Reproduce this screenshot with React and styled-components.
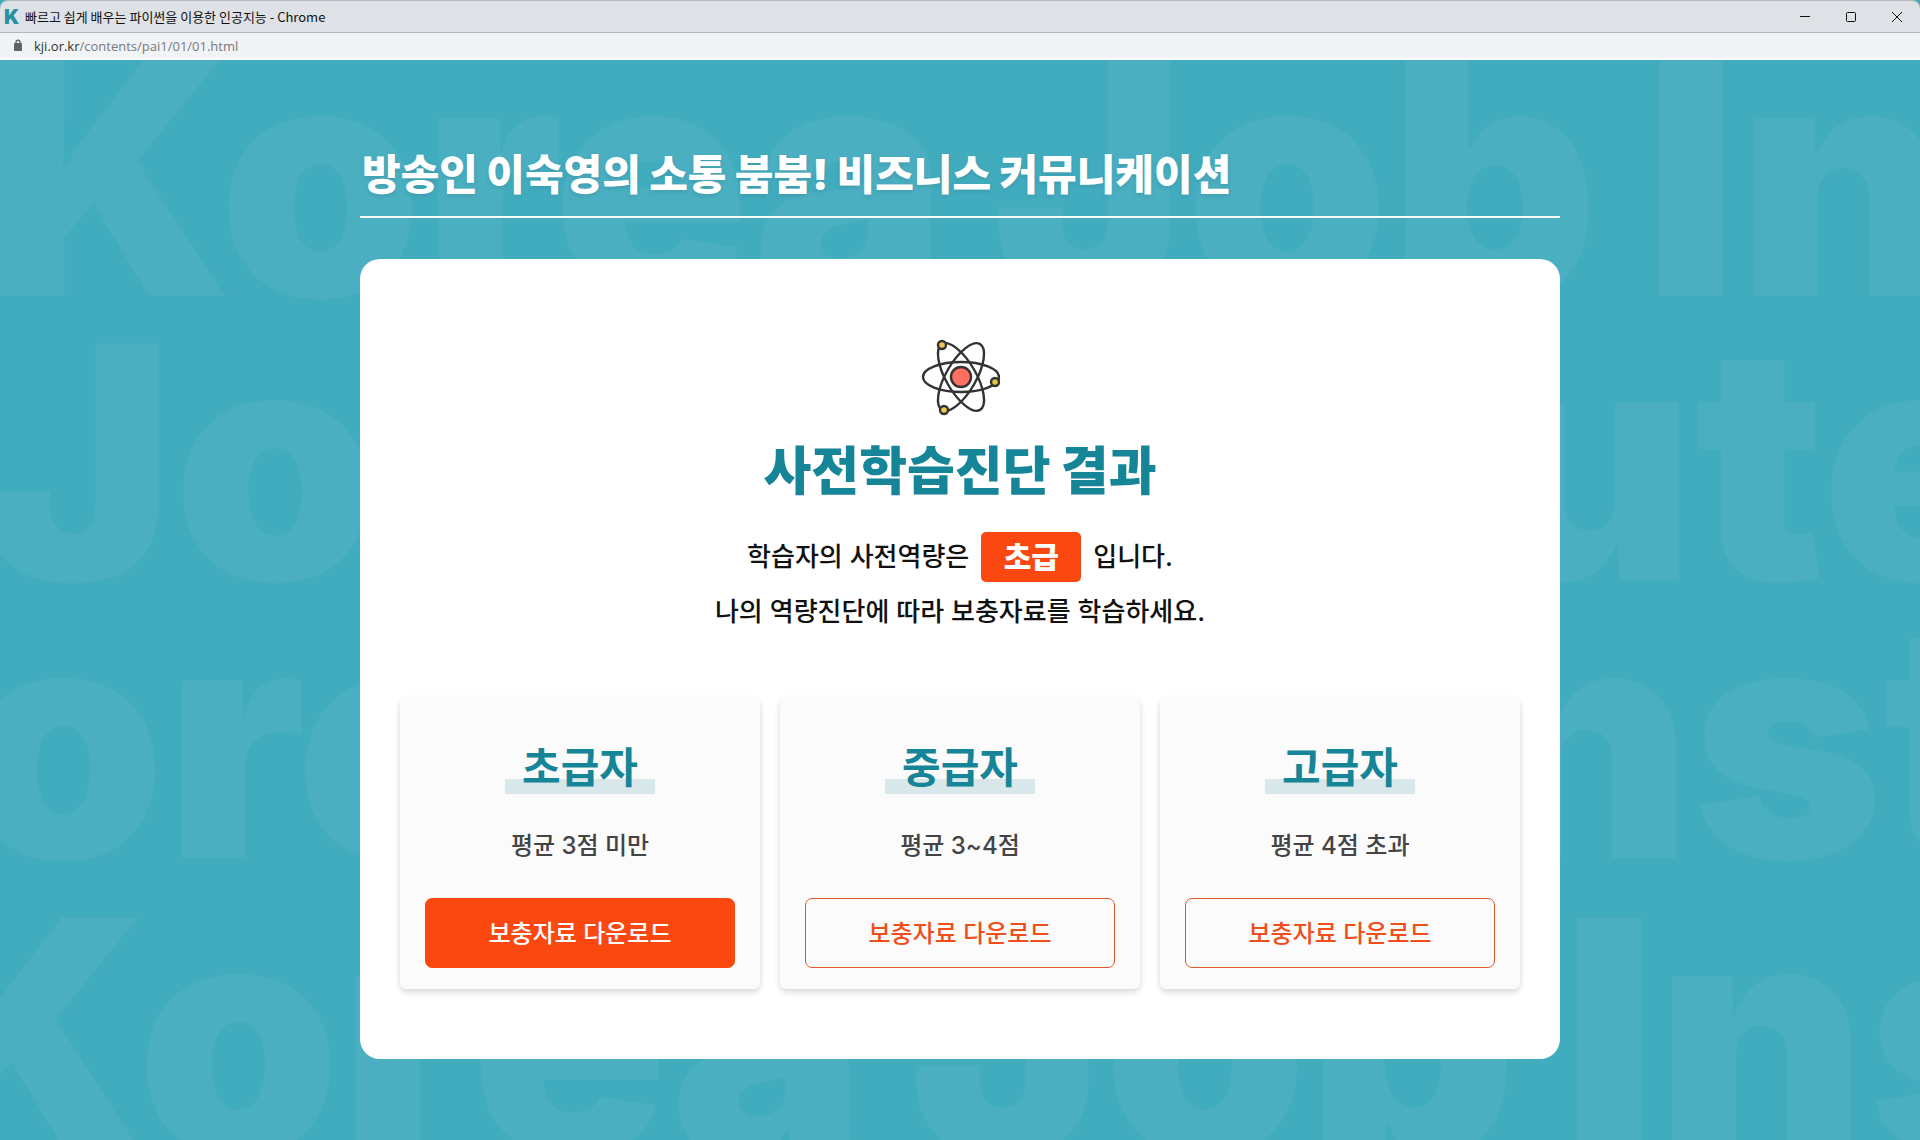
import styled, { createGlobalStyle } from "styled-components";

const GlobalStyle = createGlobalStyle`
  * {
    box-sizing: border-box;
  }

  body {
    margin: 0;
    font-family: Inter, "Noto Sans CJK KR", sans-serif;
    background-color: #42acbf;
  }

  h1, h2, h3, p {
    margin: 0;
  }

  button {
    font-family: inherit;
    cursor: pointer;
  }
`;

const Window = styled.div`
  min-height: 100vh;
  display: flex;
  flex-direction: column;
`;

const TitleBar = styled.div`
  height: 33px;
  padding-left: 4px;
  display: flex;
  align-items: center;
  border: 1px solid #b4b7bc;
  border-width: 1px 0;
  border-radius: 8px 8px 0 0;
  background-color: #dee1e6;
`;

const Favicon = styled.span`
  width: 21px;
  font-size: 20px;
  line-height: 20px;
  font-weight: 900;
  color: #2791a3;
`;

const WindowTitle = styled.span`
  flex: 1;
  font-family: "Noto Sans CJK KR", sans-serif;
  font-size: 13px;
  line-height: 20px;
  color: #111;
`;

const WindowButton = styled.button`
  width: 46px;
  height: 30px;
  padding: 0;
  display: flex;
  align-items: center;
  justify-content: center;
  border: none;
  background: none;
`;

const AddressBar = styled.div`
  height: 27px;
  padding-left: 13px;
  display: flex;
  align-items: center;
  gap: 11px;
  border-bottom: 2px solid #fbfcfc;
  background-color: #f1f3f4;
`;

const Url = styled.span`
  font-family: "Open Sans", sans-serif;
  font-size: 13px;
  line-height: 20px;
  color: #777a7e;
`;

const Host = styled.span`
  color: #333;
`;

const Page = styled.div`
  flex: 1;
  position: relative;
  overflow: hidden;
  background-color: #42acbf;
`;

const Watermark = styled.div`
  position: absolute;
  inset: 0;
  overflow: hidden;
  font-size: 325px;
  font-weight: 900;
  line-height: 236px;
  color: #4aafc1;
  user-select: none;
`;

const WatermarkRow = styled.div`
  display: flex;
  gap: 45px;
  white-space: nowrap;
  margin-left: ${(props) => props.$shift}px;
  margin-bottom: ${(props) => props.$space}px;
`;

const Content = styled.main`
  position: relative;
  max-width: 1200px;
  margin: 0 auto;
  padding: 87px 0 81px;
`;

const CourseTitle = styled.h1`
  padding: 0 2px 13px;
  border-bottom: 2px solid white;
  font-size: 42px;
  line-height: 56px;
  font-weight: 900;
  color: white;
  text-shadow: 0 2px 4px rgba(0, 0, 0, 0.1);
`;

const Panel = styled.section`
  margin-top: 41px;
  padding: 78px 40px 70px;
  display: flex;
  flex-direction: column;
  align-items: center;
  border-radius: 20px;
  background-color: white;
`;

const ResultTitle = styled.h2`
  margin: 25px 0 30px;
  font-size: 52px;
  line-height: 60px;
  font-weight: 900;
  color: #178598;
`;

const ResultLine = styled.p`
  display: flex;
  align-items: center;
  gap: 12px;
  margin-bottom: 5px;
  font-size: 26px;
  line-height: 50px;
  font-weight: 500;
  color: #111;
`;

const Level = styled.strong`
  width: 100px;
  border-radius: 5px;
  text-align: center;
  font-size: 30px;
  font-weight: 900;
  color: white;
  background-color: #fb4811;
`;

const Cards = styled.div`
  width: 100%;
  margin-top: 55px;
  display: grid;
  grid-template-columns: repeat(3, 1fr);
  gap: 20px;
`;

const Card = styled.article`
  padding: 40px 25px 21px;
  display: flex;
  flex-direction: column;
  align-items: center;
  border-radius: 6px;
  background-color: #fbfbfb;
  box-shadow: 0 3px 6px rgba(0, 0, 0, 0.16);
`;

const CardTitle = styled.h3`
  width: 150px;
  text-align: center;
  font-size: 42px;
  line-height: 61px;
  font-weight: 700;
  color: #178598;
  background: linear-gradient(#d8e8ea, #d8e8ea) left bottom 4px / 100% 15px no-repeat;
`;

const CardRange = styled.p`
  margin: 32px 0 36px;
  font-size: 24px;
  line-height: 32px;
  font-weight: 500;
  color: #444;
`;

const DownloadButton = styled.button`
  width: 100%;
  height: 70px;
  padding: 2px 0 0;
  border: 1px solid ${(props) => (props.$active ? "#fb4811" : "#e2582c")};
  border-radius: 7px;
  font-size: 24px;
  line-height: 32px;
  font-weight: 500;
  color: ${(props) => (props.$active ? "white" : "#f04e1c")};
  background-color: ${(props) => (props.$active ? "#fb4811" : "transparent")};
`;

const watermarkRows = [
	{ words: ["Korea", "Job", "Institute"], shift: -15, space: 48 },
	{ words: ["Job", "Institute", "Korea"], shift: -20, space: 42 },
	{ words: ["Korea", "Job", "Institute"], shift: -272, space: 60 },
	{ words: ["Korea", "Job", "Institute"], shift: -97, space: 0 },
];

const levels = [
	{ title: "초급자", range: "평균 3점 미만", active: true },
	{ title: "중급자", range: "평균 3~4점", active: false },
	{ title: "고급자", range: "평균 4점 초과", active: false },
];

const LockIcon = () => (
	<svg width="10" height="13" viewBox="0 0 10 13">
		<rect x="1" y="4" width="8" height="8" rx="1" fill="#5f6368" />
		<path d="M3 5V3.2a2 2 0 0 1 4 0V5" fill="none" stroke="#5f6368" strokeWidth="1.4" />
	</svg>
);

const AtomIcon = () => (
	<svg width="80" height="80" viewBox="-41 -40 80 80" fill="none" stroke="#333" strokeWidth="2.4">
		<ellipse rx="38" ry="15" />
		<ellipse rx="38" ry="15" transform="rotate(60)" />
		<ellipse rx="38" ry="15" transform="rotate(-60)" />
		<circle r="10" fill="#ff7062" />
		<circle cx="-19" cy="-32" r="4" fill="#f0c94e" />
		<circle cx="-17" cy="33" r="4" fill="#f0c94e" />
		<circle cx="34" cy="5" r="4" fill="#e6c342" />
	</svg>
);

const App = () => {
	return (
		<Window>
			<GlobalStyle />
			<TitleBar>
				<Favicon>K</Favicon>
				<WindowTitle>빠르고 쉽게 배우는 파이썬을 이용한 인공지능 - Chrome</WindowTitle>
				<WindowButton aria-label="최소화">
					<svg width="10" height="10" stroke="#111">
						<path d="M0 4.5h10" />
					</svg>
				</WindowButton>
				<WindowButton aria-label="최대화">
					<svg width="10" height="10" stroke="#111" fill="none">
						<rect x="0.5" y="0.5" width="9" height="9" rx="1" />
					</svg>
				</WindowButton>
				<WindowButton aria-label="닫기">
					<svg width="10" height="10" stroke="#111">
						<path d="M0 0L10 10M10 0L0 10" />
					</svg>
				</WindowButton>
			</TitleBar>
			<AddressBar>
				<LockIcon />
				<Url>
					<Host>kji.or.kr</Host>/contents/pai1/01/01.html
				</Url>
			</AddressBar>
			<Page>
				<Watermark aria-hidden="true">
					{watermarkRows.map((row, i) => (
						<WatermarkRow key={i} $shift={row.shift} $space={row.space}>
							{row.words.map((word) => (
								<span key={word}>{word}</span>
							))}
						</WatermarkRow>
					))}
				</Watermark>
				<Content>
					<CourseTitle>방송인 이숙영의 소통 붐붐! 비즈니스 커뮤니케이션</CourseTitle>
					<Panel>
						<AtomIcon />
						<ResultTitle>사전학습진단 결과</ResultTitle>
						<ResultLine>
							학습자의 사전역량은 <Level>초급</Level> 입니다.
						</ResultLine>
						<ResultLine>나의 역량진단에 따라 보충자료를 학습하세요.</ResultLine>
						<Cards>
							{levels.map((level) => (
								<Card key={level.title}>
									<CardTitle>{level.title}</CardTitle>
									<CardRange>{level.range}</CardRange>
									<DownloadButton $active={level.active}>보충자료 다운로드</DownloadButton>
								</Card>
							))}
						</Cards>
					</Panel>
				</Content>
			</Page>
		</Window>
	);
};

export default App;
